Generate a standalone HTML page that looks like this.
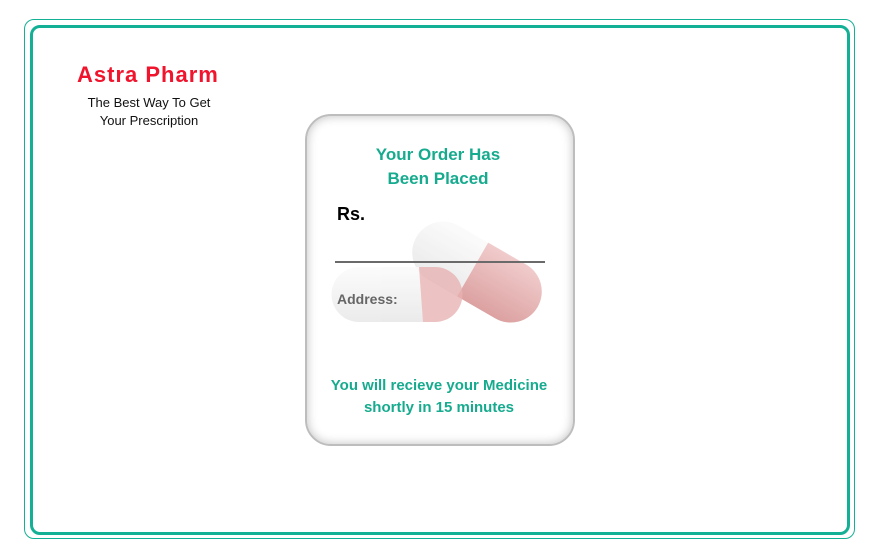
<!DOCTYPE html>
<html><head><meta charset="utf-8"><style>
body{margin:0;width:880px;height:560px;background:#fff;position:relative;overflow:hidden;font-family:"Liberation Sans",sans-serif}
.o{position:absolute;left:24px;top:19px;width:831px;height:520px;border:1px solid #14b095;border-radius:10px;box-sizing:border-box}
.i{position:absolute;left:30px;top:25px;width:820px;height:510px;border:3px solid #14b095;border-radius:10px;box-sizing:border-box}
.t{position:absolute;left:77px;top:62px;color:#f0142d;font-size:22px;font-weight:bold;letter-spacing:1px}
.s{position:absolute;left:70px;top:94px;width:158px;text-align:center;font-size:13px;line-height:18px;color:#111}
.c{position:absolute;left:305px;top:114px;width:270px;height:332px;border:2px solid #bdbdbd;border-radius:26px;box-sizing:border-box;box-shadow:inset 0 0 10px rgba(0,0,0,.25);overflow:hidden;background:#fff}
.g{color:#16ab8e;font-weight:bold;text-align:center;position:absolute;width:100%}
</style></head><body>
<div class="o"></div><div class="i"></div>
<div class="t">Astra Pharm</div>
<div class="s">The Best Way To Get<br>Your Prescription</div>
<div class="c">
<svg style="position:absolute;left:0;top:0" width="270" height="332">
<defs>
<linearGradient id="r" x1="0" y1="0" x2="0" y2="1"><stop offset="0" stop-color="#eec0c0"/><stop offset="1" stop-color="#d48a8a"/></linearGradient>
<linearGradient id="w" x1="0" y1="0" x2="0" y2="1"><stop offset="0" stop-color="#fbfbfb"/><stop offset="1" stop-color="#e6e6e6"/></linearGradient>
</defs>
<g opacity="0.8" transform="rotate(30 170 156)">
<rect x="100" y="125" width="140" height="62" rx="31" fill="url(#w)"/>
<path d="M165 125 H209 A31 31 0 0 1 209 187 H165 Z" fill="url(#r)"/>
</g>
<g opacity="0.8">
<path d="M52 151 H118 L122 206 H52 A27 27 0 0 1 52 151 Z" fill="url(#w)"/>
<path d="M112 151 H128 A27 27 0 0 1 128 206 H116 Z" fill="#e9b3b3"/>
</g>
<rect x="28" y="145" width="210" height="2" fill="#6a6a6a"/>
</svg>
<div class="g" style="top:27px;font-size:17px;line-height:24px;left:-2px">Your Order Has<br>Been Placed</div>
<div style="position:absolute;left:30px;top:88px;font-size:18px;font-weight:bold;color:#000">Rs.</div>
<div style="position:absolute;left:30px;top:175px;font-size:14px;font-weight:bold;color:#666">Address:</div>
<div class="g" style="top:259px;font-size:15px;line-height:22px;left:-1px">You will recieve your Medicine<br>shortly in 15 minutes</div>
</div>
</body></html>
